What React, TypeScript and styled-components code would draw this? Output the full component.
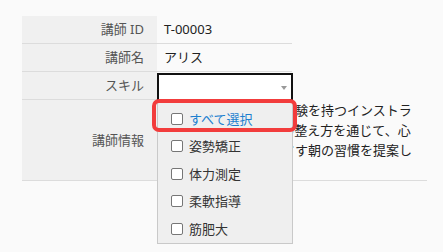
import * as React from 'react';
import styled, { createGlobalStyle } from 'styled-components';

const GlobalStyle = createGlobalStyle`
	html, body {
		margin: 0;
		padding: 0;
		background: #fafafa;
	}
	body {
		font-family: "Noto Sans", "Noto Sans CJK JP", sans-serif;
		font-size: 13px;
		color: #222;
	}
`;

const skills = ['姿勢矯正', '体力測定', '柔軟指導', '筋肥大'];

const App: React.FC = () => {
	return (
		<>
			<GlobalStyle />
			<Page>
				<Table>
					<Row>
						<Label>講師 ID</Label>
						<Value width={135}>T-00003</Value>
					</Row>
					<Row>
						<Label>講師名</Label>
						<Value width={135}>アリス</Value>
					</Row>
					<Row>
						<Label>スキル</Label>
						<Value width={135}>
							<SelectBox>
								<Arrow />
								<Dropdown>
									<Highlight />
									<Option>
										<Check />
										<OptionText $active>すべて選択</OptionText>
									</Option>
									{skills.map((s) => (
										<Option key={s}>
											<Check />
											<OptionText>{s}</OptionText>
										</Option>
									))}
								</Dropdown>
							</SelectBox>
						</Value>
					</Row>
					<Row>
						<Label>講師情報</Label>
						<InfoValue>
							ヨガ歴十年、豊富な経験を持つインストラクター。呼吸法と体の整え方を通じて、心身を穏やかに目覚めさす朝の習慣を提案します。
						</InfoValue>
					</Row>
				</Table>
			</Page>
		</>
	);
};

export default App;

const Page = styled.div`
	min-height: 252px;
	box-sizing: border-box;
	padding: 16px 22px;
`;

const Table = styled.div`
	display: flex;
	flex-direction: column;
	align-items: flex-start;
`;

const Row = styled.div`
	display: flex;
	border-bottom: 1px solid #dcdcdc;
`;

const Label = styled.div`
	width: 135px;
	box-sizing: border-box;
	padding-right: 13px;
	display: flex;
	align-items: center;
	justify-content: flex-end;
	background: #f0f0f0;
	color: #555;
	line-height: 27px;
`;

const Value = styled.div<{ width: number }>`
	width: ${(p) => p.width}px;
	height: 27px;
	box-sizing: border-box;
	padding-left: 7px;
	display: flex;
	align-items: center;
	position: relative;
	line-height: 27px;
`;

const InfoValue = styled.div`
	width: 270px;
	box-sizing: border-box;
	padding: 0 15px 0 8px;
	line-height: 20px;
	word-break: break-all;
`;

const SelectBox = styled.div`
	position: absolute;
	left: 0;
	top: 1px;
	width: 136px;
	height: 28px;
	box-sizing: border-box;
	border: 2px solid #111;
	background: #fff;
	z-index: 2;
`;

const Arrow = styled.div`
	position: absolute;
	right: 4px;
	top: 11px;
	width: 0;
	height: 0;
	border-left: 3px solid transparent;
	border-right: 3px solid transparent;
	border-top: 4px solid #9a9a9a;
`;

const Dropdown = styled.div`
	position: absolute;
	left: -2px;
	top: 25px;
	width: 136px;
	box-sizing: border-box;
	padding-top: 4px;
	background: #efefef;
	border: 1px solid #c9c9c9;
`;

const Highlight = styled.div`
	position: absolute;
	left: -6px;
	top: -2px;
	width: 145px;
	height: 33px;
	box-sizing: border-box;
	border: 4px solid #f23c3c;
	border-radius: 7px;
	pointer-events: none;
`;

const Option = styled.div`
	height: 27.5px;
	display: flex;
	align-items: center;
	padding-left: 13px;
	gap: 6px;
`;

const Check = styled.span`
	width: 12px;
	height: 12px;
	box-sizing: border-box;
	border: 1px solid #767676;
	border-radius: 2px;
	background: #fff;
	flex-shrink: 0;
`;

const OptionText = styled.span<{ $active?: boolean }>`
	color: ${(p) => (p.$active ? '#1d7fcf' : '#333')};
	line-height: 20px;
`;
